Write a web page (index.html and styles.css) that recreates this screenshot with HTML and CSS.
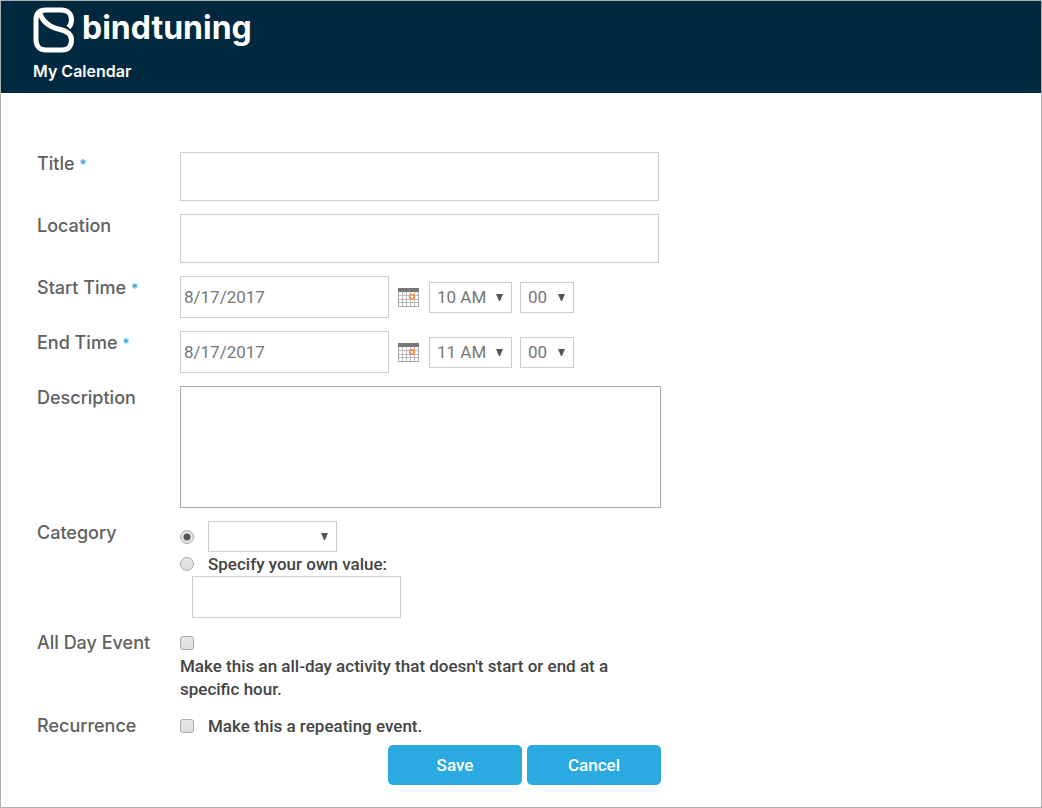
FILE: index.html
```html
<!DOCTYPE html>
<html lang="en">
<head>
    <meta charset="UTF-8">
    <meta name="viewport" content="width=device-width, initial-scale=1.0">
    <title>My Calendar</title>
    <link rel="stylesheet" href="styles.css">
</head>
<body>

    <!-- Header -->
    <header class="header">
        <a class="logo" href="#">
            <svg width="42" height="46" viewBox="0 0 42 46" fill="none" stroke="#fff" stroke-width="5" aria-hidden="true">
                <path d="M35.500 20.500 C37.500 18.500 38.500 16 38.500 12.500 C38.500 6.500 34.500 3 28 3 H13 C6 3 3 7 3 13 V33 C3 39.500 7 43 13 43 H29 C35 43 38.500 39.500 38.500 33 C38.500 27 34 24 27 22.500 C16 20 9 14 6.500 5"/>
            </svg>
            <span>bindtuning</span>
        </a>
        <h1>My Calendar</h1>
    </header>

    <!-- Event form -->
    <form class="event-form">
        <div class="form-row">
            <label class="form-label" for="title">Title <span class="required">*</span></label>
            <input class="text-large" type="text" id="title" name="title">
        </div>

        <div class="form-row">
            <label class="form-label" for="location">Location</label>
            <input class="text-large" type="text" id="location" name="location">
        </div>

        <div class="form-row">
            <label class="form-label" for="startDate">Start Time <span class="required">*</span></label>
            <div class="date-time">
                <input class="text-small" type="text" id="startDate" name="startDate" value="8/17/2017">
                <button class="calendar-button" type="button" aria-label="Pick start date">
                    <svg width="21" height="19" viewBox="0 0 21 19" aria-hidden="true">
                        <path fill="#aaa" d="M0 0h21v19H0z"/>
                        <path fill="#fff" d="M1 4h19v14H1z"/>
                        <path fill="#777" d="M0 0h21v4H0z"/>
                        <path stroke="#bbb" d="M4.500 4v14M8.500 4v14M12.500 4v14M16.500 4v14M1 7.500h19M1 11.500h19M1 14.500h19"/>
                        <path fill="#fff" stroke="#f39a5a" stroke-width="2" d="M12 7h4v4h-4z"/>
                    </svg>
                </button>
                <select class="hour" aria-label="Start hour"><option>10 AM</option><option>11 AM</option></select>
                <select class="minute" aria-label="Start minutes"><option>00</option><option>30</option></select>
            </div>
        </div>

        <div class="form-row">
            <label class="form-label" for="endDate">End Time <span class="required">*</span></label>
            <div class="date-time">
                <input class="text-small" type="text" id="endDate" name="endDate" value="8/17/2017">
                <button class="calendar-button" type="button" aria-label="Pick end date">
                    <svg width="21" height="19" viewBox="0 0 21 19" aria-hidden="true">
                        <path fill="#aaa" d="M0 0h21v19H0z"/>
                        <path fill="#fff" d="M1 4h19v14H1z"/>
                        <path fill="#777" d="M0 0h21v4H0z"/>
                        <path stroke="#bbb" d="M4.500 4v14M8.500 4v14M12.500 4v14M16.500 4v14M1 7.500h19M1 11.500h19M1 14.500h19"/>
                        <path fill="#fff" stroke="#f39a5a" stroke-width="2" d="M12 7h4v4h-4z"/>
                    </svg>
                </button>
                <select class="hour" aria-label="End hour"><option>11 AM</option><option>12 PM</option></select>
                <select class="minute" aria-label="End minutes"><option>00</option><option>30</option></select>
            </div>
        </div>

        <div class="form-row">
            <label class="form-label" for="description">Description</label>
            <textarea id="description" name="description"></textarea>
        </div>

        <div class="form-row">
            <span class="form-label">Category</span>
            <div>
                <div class="choice">
                    <input type="radio" id="categoryList" name="category" aria-label="Choose a category" checked>
                    <select class="category" aria-label="Category"><option></option><option>Meeting</option></select>
                </div>
                <div class="choice">
                    <input type="radio" id="categoryOwn" name="category">
                    <label for="categoryOwn">Specify your own value:</label>
                </div>
                <input class="text-small own-value" type="text" aria-label="Own category value">
            </div>
        </div>

        <div class="form-row">
            <label class="form-label" for="allDay">All Day Event</label>
            <div>
                <div class="choice">
                    <input type="checkbox" id="allDay" name="allDay">
                </div>
                <p>Make this an all-day activity that doesn't start or end at a specific hour.</p>
            </div>
        </div>

        <div class="form-row">
            <span class="form-label">Recurrence</span>
            <div class="choice">
                <input type="checkbox" id="recurrence" name="recurrence">
                <label for="recurrence">Make this a repeating event.</label>
            </div>
        </div>

        <div class="buttons">
            <button class="button" type="button">Save</button>
            <button class="button" type="button">Cancel</button>
        </div>
    </form>

</body>
</html>
```
FILE: styles.css
```css
* {
    margin: 0;
    padding: 0;
    box-sizing: border-box;
}

body {
    font-family: Roboto, Arial, sans-serif;
    font-size: 17px;
    line-height: 24px;
    color: #444;
    background-color: #fff;
    border: 1px solid #b0b0b0;
    min-height: 100vh;
}

/* Header */
.header {
    background-color: #00283e;
    color: #fff;
    padding: 6px 32px 10px;
}

.logo {
    display: flex;
    gap: 7px;
    color: #fff;
    font-family: Inter, sans-serif;
    font-size: 32px;
    font-weight: 700;
    line-height: 42px;
    text-decoration: none;
}

.header h1 {
    font-family: Inter, sans-serif;
    font-size: 16px;
    font-weight: 600;
    line-height: 24px;
    margin-top: 6px;
}

/* Form */
.event-form {
    max-width: 660px;
    padding: 59px 0 21px 36px;
}

.form-row {
    display: grid;
    grid-template-columns: 143px minmax(0, 1fr);
    align-items: start;
    margin-bottom: 13px;
}

.form-label {
    font-family: Inter, sans-serif;
    font-size: 18px;
    font-weight: 500;
    color: #606060;
}

.required {
    color: #2ba9e1;
    font-size: 14px;
}

input[type="text"], textarea, select {
    font-family: inherit;
    font-size: 17px;
    color: #777;
    background-color: #fff;
    border: 1px solid #ccc;
    padding: 3px;
}

.text-large {
    height: 49px;
    margin-right: 2px;
}

.text-small {
    width: 209px;
    height: 42px;
}

textarea {
    display: block;
    height: 122px;
    border-color: #aaa;
    resize: none;
}

.date-time {
    display: flex;
    align-items: center;
}

.calendar-button {
    display: flex;
    margin: 0 10px 0 9px;
    border: none;
    background: none;
    cursor: pointer;
}

select {
    appearance: none;
    height: 31px;
    margin-right: 8px;
    /* small down arrow */
    background: url("data:image/svg+xml,%3Csvg xmlns='http://www.w3.org/2000/svg' width='7' height='7'%3E%3Cpath fill='%23555' d='M0 0h7L4 7H3z'/%3E%3C/svg%3E") no-repeat right 8px center #fff;
}

select.hour, select.minute {
    padding: 0 7px;
}

.hour {
    width: 83px;
}

.minute {
    width: 54px;
}

.category {
    width: 129px;
}

/* Radios and tick boxes */
.choice {
    display: flex;
    align-items: center;
    gap: 14px;
    min-height: 24px;
    font-weight: 500;
}

.choice input {
    appearance: none;
    width: 14px;
    height: 14px;
    border: 1px solid #aaa;
    border-radius: 3px;
    background: linear-gradient(#e8e8e8, #ddd);
}

.choice input[type="radio"] {
    border-radius: 50%;
}

.choice input[type="radio"]:checked {
    background: radial-gradient(circle, #555 3px, #e4e4e4 4px);
}

.own-value {
    display: block;
    margin-left: 12px;
}

p {
    font-weight: 500;
    line-height: 23px;
}

/* Buttons */
.buttons {
    display: flex;
    justify-content: flex-end;
    gap: 5px;
    margin-top: -6px;
}

.button {
    width: 134px;
    height: 40px;
    border: none;
    border-radius: 5px;
    background-color: #2ba9e1;
    color: #fff;
    font-family: inherit;
    font-size: 17px;
    font-weight: 500;
    cursor: pointer;
}

.button:hover {
    background-color: #1b93c9;
}
```
